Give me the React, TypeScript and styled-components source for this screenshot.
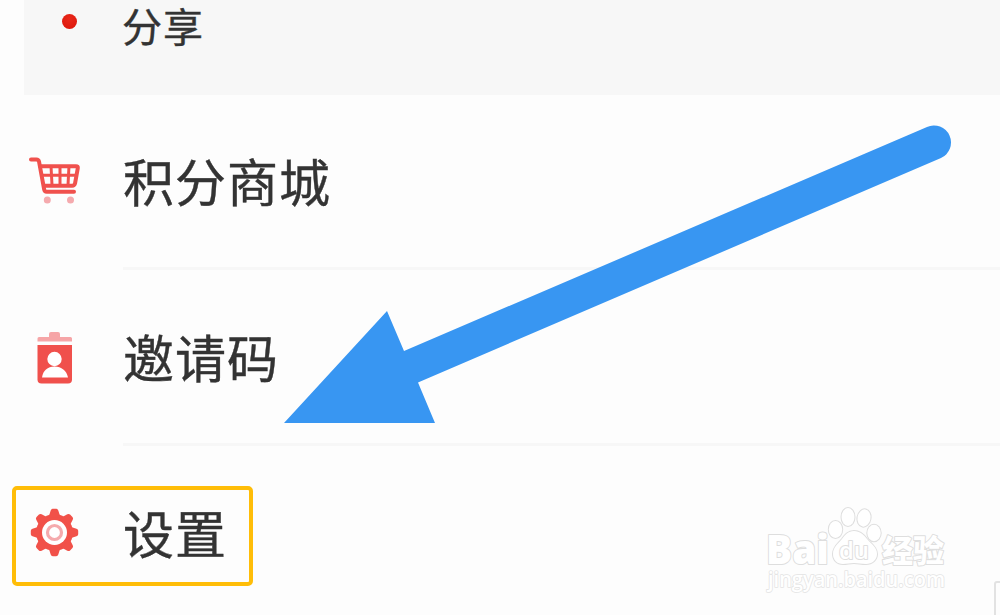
import React from 'react';
import styled, {createGlobalStyle} from 'styled-components';

const GlobalStyle = createGlobalStyle`
  * {
    box-sizing: border-box;
  }

  body {
    margin: 0;
    background: #fdfdfd;
    overflow: hidden;
  }
`;

const Page = styled.div`
  position: relative;
  width: 1000px;
  height: 615px;
  overflow: hidden;
  background: #fdfdfd;
  color: #333;
  font-family: 'Noto Sans CJK SC', 'Liberation Sans', sans-serif;
  -webkit-text-stroke: 0.4px #333;
`;

const SharePanel = styled.div`
  display: flex;
  align-items: flex-start;
  height: 95px;
  margin-left: 24px;
  background: #f7f7f7;
`;

const Dot = styled.span`
  flex: none;
  width: 15px;
  height: 15px;
  margin: 14px 45px 0 38px;
  border-radius: 50%;
  background: radial-gradient(circle at 50% 30%, #e9281a, #db1509);
`;

const ShareLabel = styled.span`
  font-size: 40px;
  letter-spacing: 1px;
  line-height: 50px;
`;

const MenuList = styled.div`
  margin-top: -1px;
`;

const MenuRow = styled.div`
  display: flex;
  height: 176px;
`;

const IconCell = styled.div`
  display: flex;
  flex: none;
  align-items: center;
  width: 123px;
  padding: 0 0 4px 15px;
`;

const MenuBody = styled.div<{$last?: boolean}>`
  display: flex;
  flex: 1;
  align-items: center;
  padding-bottom: ${props => (props.$last ? '4px' : '1px')};
  border-bottom: ${props => (props.$last ? '0' : '3px solid #f7f7f7')};
`;

const MenuLabel = styled.span`
  font-size: 51px;
  letter-spacing: 1px;
  line-height: 76px;
`;

const Highlight = styled.div`
  position: absolute;
  left: 12px;
  top: 486px;
  width: 241px;
  height: 100px;
  border: 4px solid #ffbd08;
  border-radius: 5px;
`;

const Arrow = styled.svg`
  position: absolute;
  left: 0;
  top: 0;
`;

const Watermark = styled.svg`
  position: absolute;
  left: 750px;
  top: 495px;
  -webkit-text-stroke: 0;
`;

const Corner = styled.div`
  position: absolute;
  left: 994px;
  top: 581px;
  width: 20px;
  height: 50px;
  border: 2px solid #e2e2e2;
  border-radius: 3px;
`;

const CartIcon = () => (
  <svg width="80" height="70" viewBox="0 0 80 70" fill="none" stroke="#f0514d">
    <path d="M16 14.5h5.5q2 0 2.5 2l5.2 28.2q.4 2 2.4 2H59" strokeWidth="4" strokeLinecap="round" />
    <path d="M25 21.2h36q2.2 0 1.8 2l-2.7 15q-.5 2.5-3 2.5H29" strokeWidth="4" strokeLinejoin="round" />
    <path d="M26 30.3h35M36 21l1 19M45 21v19M54 21l-1 19" strokeWidth="3" />
    <circle cx="32.3" cy="55" r="3.5" fill="#f5aaae" stroke="none" />
    <circle cx="55.5" cy="55" r="3.5" fill="#f5aaae" stroke="none" />
  </svg>
);

const BadgeIcon = () => (
  <svg width="80" height="70" viewBox="0 0 80 70">
    <path d="M22.5 20.5v-3q0-1.500 1.500-1.500h10v-3q0-2 2-2h7q2 0 2 2v3h10.500q1.500 0 1.500 1.500v3z" fill="#f6a5a7" />
    <path d="M22.500 24H57v34.500q0 4-4 4H26.500q-4 0-4-4z" fill="#f0504c" />
    <circle cx="39.500" cy="38" r="7.200" fill="#fff" />
    <path d="M27 56.500c1-7 5.500-11 12.500-11S51.500 49.500 53 56.500z" fill="#fff" />
  </svg>
);

const GearIcon = () => (
  <svg width="80" height="70" viewBox="-39.500 -35.500 80 70">
    <g fill="#f15149">
      <circle r="18.500" />
      {[0, 45, 90, 135, 180, 225, 270, 315].map(angle => (
        <path
          key={angle}
          d="M-6-15L-3.800-22Q-3.300-23.700-1.700-23.700H1.700Q3.300-23.700 3.800-22L6-15z"
          transform={`rotate(${angle})`}
        />
      ))}
    </g>
    <circle r="12.500" fill="#fff" />
    <circle r="7" fill="none" stroke="#f5aaad" strokeWidth="3.200" />
  </svg>
);

const BaiduWatermark = () => (
  <Watermark width="210" height="110" viewBox="0 0 210 110">
    <g
      fill="#fff"
      stroke="#dedede"
      strokeWidth="2"
      strokeLinejoin="round"
      paintOrder="stroke"
      fontFamily="'Open Sans', 'Noto Sans', sans-serif"
    >
      <text x="16" y="68.5" fontSize="41" fontWeight="800" textLength="63" lengthAdjust="spacingAndGlyphs">
        Bai
      </text>
      <ellipse cx="85.500" cy="34.500" rx="6.700" ry="8.500" />
      <ellipse cx="98" cy="22" rx="6.500" ry="9" />
      <ellipse cx="114" cy="23" rx="6.500" ry="8.700" transform="rotate(10 114 23)" />
      <ellipse cx="124" cy="38" rx="6.700" ry="8.200" />
      <path d="M104 36c-6 0-9 4-12 8-4 5-9 8-9 15 0 6 4 10 10 10 4 0 7-1 11-1s7 1 12 1c6 0 11-4 11-10 0-7-6-10-10-15-3-4-7-8-13-8z" />
      <text x="89" y="64" fontSize="24" fontWeight="600" textLength="30" lengthAdjust="spacingAndGlyphs">
        du
      </text>
      <text x="132" y="67" fontSize="31" fontWeight="900" fontFamily="'Noto Sans CJK SC', sans-serif">
        经验
      </text>
      <text
        x="18"
        y="92"
        fontSize="21"
        fontWeight="600"
        stroke="#e4e4e4"
        strokeWidth="1.600"
        textLength="177"
        lengthAdjust="spacingAndGlyphs"
      >
        jingyan.baidu.com
      </text>
    </g>
  </Watermark>
);

const MENU_ITEMS = [
  {label: '积分商城', Icon: CartIcon},
  {label: '邀请码', Icon: BadgeIcon},
  {label: '设置', Icon: GearIcon}
];

const App: React.FC = () => (
  <>
    <GlobalStyle />
    <Page>
      <SharePanel>
        <Dot />
        <ShareLabel>分享</ShareLabel>
      </SharePanel>
      <MenuList>
        {MENU_ITEMS.map(({label, Icon}, index) => (
          <MenuRow key={label}>
            <IconCell>
              <Icon />
            </IconCell>
            <MenuBody $last={index === MENU_ITEMS.length - 1}>
              <MenuLabel>{label}</MenuLabel>
            </MenuBody>
          </MenuRow>
        ))}
      </MenuList>
      <Highlight />
      <Arrow width="1000" height="615" viewBox="0 0 1000 615">
        <path d="M284 423L387 311L404 351L927 127A17 17 0 0 1 941 158L418 382.500L435 423z" fill="#3896f2" />
      </Arrow>
      <BaiduWatermark />
      <Corner />
    </Page>
  </>
);

export default App;
